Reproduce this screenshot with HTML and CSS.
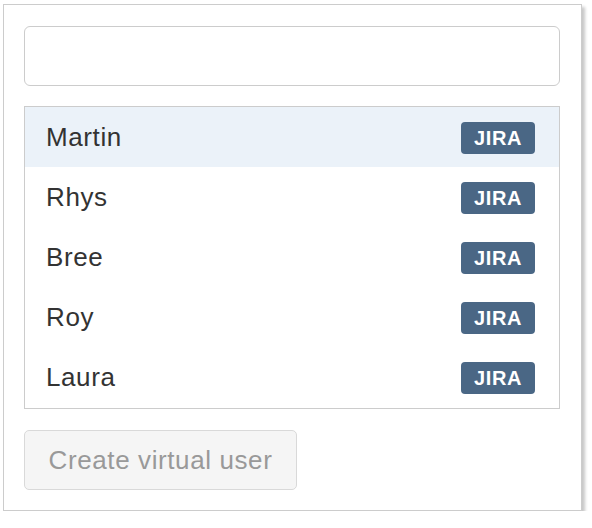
FILE: index.html
```html
<!DOCTYPE html>
<html>
<head>
<meta charset="utf-8">
<link rel="stylesheet" href="styles.css">
</head>
<body>
<div class="panel">
  <input class="search" type="text">
  <ul class="list">
    <li class="row active"><span class="name">Martin</span><span class="lozenge">JIRA</span></li>
    <li class="row"><span class="name">Rhys</span><span class="lozenge">JIRA</span></li>
    <li class="row"><span class="name">Bree</span><span class="lozenge">JIRA</span></li>
    <li class="row"><span class="name">Roy</span><span class="lozenge">JIRA</span></li>
    <li class="row"><span class="name">Laura</span><span class="lozenge">JIRA</span></li>
  </ul>
  <button class="btn" disabled>Create virtual user</button>
</div>
</body>
</html>
```
FILE: styles.css
```css
html, body {
  margin: 0;
  padding: 0;
  background: #fff;
}
body {
  font-family: "Liberation Sans", Arial, sans-serif;
  color: #333;
}
.panel {
  box-sizing: border-box;
  margin: 4px 0 0 3px;
  width: 579px;
  height: 507px;
  border: 1px solid #ccc;
  box-shadow: 3px 3px 3px rgba(0, 0, 0, 0.22);
  padding: 21px 21px 20px 20px;
  display: flex;
  flex-direction: column;
  align-items: flex-start;
  background: #fff;
}
.search {
  box-sizing: border-box;
  width: 536px;
  height: 60px;
  border: 1px solid #ccc;
  border-radius: 6px;
  margin: 0;
  padding: 0 16px;
  font: inherit;
  font-size: 26px;
  outline: none;
}
.list {
  box-sizing: border-box;
  list-style: none;
  margin: 20px 0 0 0;
  padding: 0 0 1px 0;
  width: 536px;
  border: 1px solid #ccc;
}
.row {
  height: 60px;
  display: flex;
  align-items: center;
  justify-content: space-between;
  padding: 0 24px 0 21px;
}
.row.active {
  background: #ebf2f9;
}
.name {
  font-size: 26px;
  letter-spacing: 0.6px;
  color: #333;
}
.lozenge {
  box-sizing: border-box;
  width: 74px;
  height: 32px;
  margin-top: 2px;
  border-radius: 4px;
  background: #4a6785;
  color: #fff;
  font-weight: bold;
  font-size: 20px;
  letter-spacing: 0.6px;
  display: flex;
  align-items: center;
  justify-content: center;
  padding-top: 1px;
}
.btn {
  box-sizing: border-box;
  margin-top: 21px;
  width: 273px;
  height: 60px;
  border: 1px solid #d9d9d9;
  border-radius: 5px;
  background: #f5f5f5;
  color: #999;
  font-family: inherit;
  font-size: 26px;
  letter-spacing: 0.6px;
  padding: 0;
  text-align: center;
}
```
